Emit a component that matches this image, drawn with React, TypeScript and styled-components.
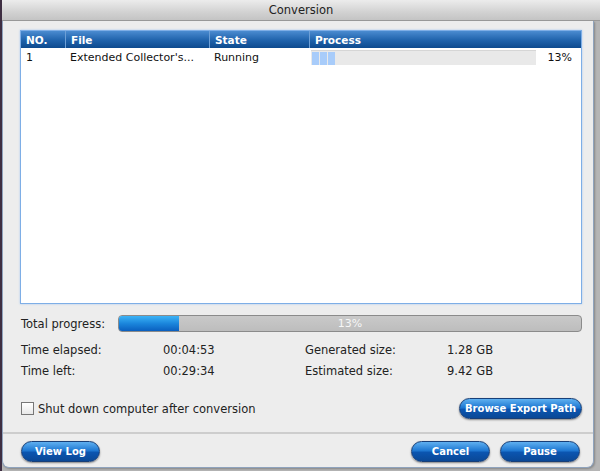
import React from 'react'
import styled, { createGlobalStyle } from 'styled-components'

const Global = createGlobalStyle`
body {
  margin: 0;
  font-family: "DejaVu Sans", Verdana, sans-serif;
  background: #b3b3b3;
}
`

const Screen = styled.div`
width: 600px;
height: 471px;
box-sizing: border-box;
border-left: 2px solid #3e2e42;
background: #b5b5b5;
display: flex;
flex-direction: column;
overflow: hidden;
`

const TitleBar = styled.div`
height: 20px;
flex: none;
display: flex;
align-items: center;
justify-content: center;
background: linear-gradient(#ececec, #d2d2d2 60%, #c4c4c4);
border-bottom: 1px solid #9a9a9a;
font-size: 11.5px;
color: #222;
`

const Sheet = styled.div`
flex: none;
height: 447px;
margin-right: 6px;
box-sizing: border-box;
background: #ededed;
border: 1px solid #8fa3bd;
border-top: none;
border-radius: 0 0 7px 7px;
box-shadow: 1px 1px 2px rgba(0, 0, 0, 0.25);
display: flex;
flex-direction: column;
`

const Content = styled.div`
padding: 9px 11px 0 17px;
display: flex;
flex-direction: column;
`

const Table = styled.div`
height: 272px;
background: #fff;
border: 1px solid #7eaee6;
box-shadow: 0 0 2px #a9c8ee;
display: flex;
flex-direction: column;
`

const Header = styled.div`
display: grid;
grid-template-columns: 44px 144px 100px 1fr;
height: 17px;
background: linear-gradient(#4a8bd0, #1f62ab 55%, #0d4a8e);
`

const HeadCell = styled.div`
color: #fff;
font-weight: bold;
font-size: 10.5px;
padding-left: 5px;
display: flex;
align-items: center;
border-left: ${p => (p.$first ? 'none' : '1px solid #6d9fd6')};
`

const Row = styled.div`
display: grid;
grid-template-columns: 44px 144px 100px 1fr;
height: 18px;
font-size: 11px;
color: #111;
`

const Cell = styled.div`
padding-left: 5px;
display: flex;
align-items: center;
white-space: nowrap;
`

const ProcessCell = styled.div`
display: flex;
align-items: center;
padding-left: 2px;
padding-right: 9px;
gap: 10px;
`

const RowBar = styled.div`
width: 225px;
height: 15px;
background: #e9e9e9;
border-top: 1px solid #d6d6d6;
box-sizing: border-box;
display: flex;
gap: 1px;
padding: 1px 1px 0;
`

const Segment = styled.div`
width: 7px;
height: 13px;
background: #a8ccfa;
`

const Pct = styled.div`
flex: 1;
text-align: right;
`

const TotalRow = styled.div`
display: flex;
align-items: center;
margin-top: 10px;
height: 19px;
font-size: 11.5px;
color: #222;
`

const TotalLabel = styled.div`
width: 97px;
padding-left: 1px;
`

const TotalBar = styled.div`
position: relative;
flex: 1;
height: 17px;
box-sizing: border-box;
border: 1px solid #8b8b8b;
border-radius: 4px;
background: linear-gradient(#c9c9c9, #bdbdbd);
overflow: hidden;
`

const TotalFill = styled.div`
height: 100%;
background: linear-gradient(#3cb3f6, #1b86dc 50%, #0a5fbf);
`

const TotalText = styled.div`
position: absolute;
inset: 0;
display: flex;
align-items: center;
justify-content: center;
color: #f6f6f6;
font-size: 11px;
`

const Stats = styled.div`
display: grid;
grid-template-columns: 142px 142px 142px 1fr;
grid-auto-rows: 21px;
margin-top: 6px;
padding-left: 1px;
font-size: 11.5px;
color: #222;
align-items: center;
`

const OptionRow = styled.div`
display: flex;
align-items: center;
justify-content: space-between;
margin-top: 17px;
padding-left: 1px;
`

const Check = styled.label`
display: flex;
align-items: center;
gap: 4px;
font-size: 11.5px;
color: #222;
`

const Box = styled.span`
width: 11px;
height: 11px;
border: 1px solid #777;
background: linear-gradient(#fff, #e8e8e8);
display: inline-block;
`

const Button = styled.button`
width: ${p => p.$w}px;
height: 21px;
border-radius: 11px;
border: 1px solid #183f78;
background: linear-gradient(#5fb0f0, #1f78d2 45%, #0b55b0 55%, #0a4896);
box-shadow: 0 1px 2px rgba(0, 0, 0, 0.45);
color: #fff;
font-family: "DejaVu Sans", Verdana, sans-serif;
font-weight: bold;
font-size: 10px;
padding: 0;
`

const Footer = styled.div`
margin-top: auto;
border-top: 2px solid #cdcdcd;
height: 35px;
box-sizing: border-box;
padding: 7px 13px 0 18px;
display: flex;
align-items: flex-start;
gap: 10px;
`

const Spacer = styled.div`
flex: 1;
`

export default function App() {
  return (
    <>
      <Global />
      <Screen>
        <TitleBar>Conversion</TitleBar>
        <Sheet>
          <Content>
            <Table>
              <Header>
                <HeadCell $first>NO.</HeadCell>
                <HeadCell>File</HeadCell>
                <HeadCell>State</HeadCell>
                <HeadCell>Process</HeadCell>
              </Header>
              <Row>
                <Cell>1</Cell>
                <Cell>Extended Collector's...</Cell>
                <Cell>Running</Cell>
                <ProcessCell>
                  <RowBar>
                    <Segment />
                    <Segment />
                    <Segment />
                  </RowBar>
                  <Pct>13%</Pct>
                </ProcessCell>
              </Row>
            </Table>
            <TotalRow>
              <TotalLabel>Total progress:</TotalLabel>
              <TotalBar>
                <TotalFill style={{ width: '13%' }} />
                <TotalText>13%</TotalText>
              </TotalBar>
            </TotalRow>
            <Stats>
              <div>Time elapsed:</div>
              <div>00:04:53</div>
              <div>Generated size:</div>
              <div>1.28 GB</div>
              <div>Time left:</div>
              <div>00:29:34</div>
              <div>Estimated size:</div>
              <div>9.42 GB</div>
            </Stats>
            <OptionRow>
              <Check>
                <Box />
                Shut down computer after conversion
              </Check>
              <Button $w={123}>Browse Export Path</Button>
            </OptionRow>
          </Content>
          <Footer>
            <Button $w={79}>View Log</Button>
            <Spacer />
            <Button $w={79}>Cancel</Button>
            <Button $w={80}>Pause</Button>
          </Footer>
        </Sheet>
      </Screen>
    </>
  )
}
